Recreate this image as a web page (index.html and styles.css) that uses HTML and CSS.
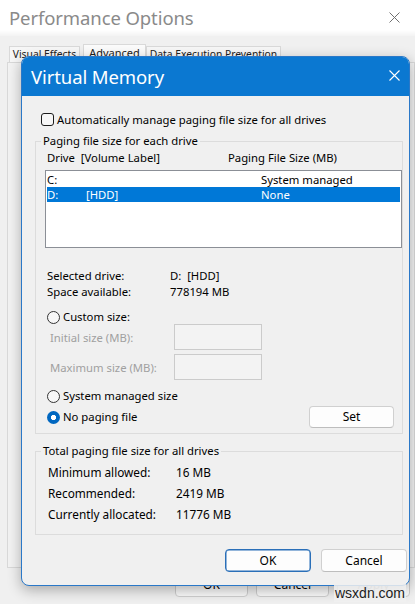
FILE: index.html
```html
<!DOCTYPE html>
<html>
<head>
<meta charset="utf-8">
<title>Virtual Memory</title>
<link rel="stylesheet" href="styles.css">
</head>
<body>
<div class="win">
  <div class="win-title">
    <span class="win-title-text">Performance Options</span>
    <svg class="win-close" width="11" height="11" viewBox="0 0 11 11"><path d="M0.5 0.5L10.5 10.5M10.5 0.5L0.5 10.5" stroke="#707070" stroke-width="1" fill="none"/></svg>
  </div>
  <div class="win-body">
    <div class="tabs">
      <div class="tab tab-visual">Visual Effects</div>
      <div class="tab tab-active">Advanced</div>
      <div class="tab tab-dep">Data Execution Prevention</div>
    </div>
    <div class="tab-panel"></div>
    <div class="win-buttons">
      <div class="wbtn">OK</div>
      <div class="wbtn">Cancel</div>
      <div class="wbtn wbtn-disabled">Apply</div>
    </div>
  </div>
</div>

<div class="dialog">
  <div class="dlg-title">
    <span class="dlg-title-text">Virtual Memory</span>
    <svg class="dlg-close" width="11" height="11" viewBox="0 0 11 11"><path d="M0.5 0.5L10.5 10.5M10.5 0.5L0.5 10.5" stroke="#ffffff" stroke-width="1.1" fill="none"/></svg>
  </div>
  <div class="dlg-body">
    <div class="check-row">
      <span class="checkbox"></span>
      <span>Automatically manage paging file size for all drives</span>
    </div>

    <fieldset class="group group-drives">
      <legend>Paging file size for each drive</legend>
      <div class="list-head">
        <span class="lh-drive">Drive&nbsp;&nbsp;[Volume Label]</span>
        <span>Paging File Size (MB)</span>
      </div>
      <div class="listbox">
        <div class="lrow">
          <span class="c-drive">C:</span><span class="c-label"></span><span>System managed</span>
        </div>
        <div class="lrow lrow-sel">
          <span class="c-drive">D:</span><span class="c-label">[HDD]</span><span>None</span>
        </div>
      </div>

      <div class="info">
        <div class="info-row"><span class="info-label">Selected drive:</span><span>D:&nbsp;&nbsp;[HDD]</span></div>
        <div class="info-row"><span class="info-label">Space available:</span><span>778194 MB</span></div>
      </div>

      <div class="radio-row radio-custom"><span class="radio"></span><span>Custom size:</span></div>
      <div class="size-row size-initial">
        <span class="size-label">Initial size (MB):</span>
        <span class="size-input"></span>
      </div>
      <div class="size-row size-max">
        <span class="size-label">Maximum size (MB):</span>
        <span class="size-input"></span>
      </div>
      <div class="radio-row radio-system"><span class="radio"></span><span>System managed size</span></div>
      <div class="nopage-row">
        <div class="radio-row"><span class="radio radio-on"></span><span>No paging file</span></div>
        <div class="btn btn-set">Set</div>
      </div>
    </fieldset>

    <fieldset class="group group-total">
      <legend>Total paging file size for all drives</legend>
      <div class="total-row"><span class="total-label">Minimum allowed:</span><span>16 MB</span></div>
      <div class="total-row"><span class="total-label">Recommended:</span><span>2419 MB</span></div>
      <div class="total-row"><span class="total-label">Currently allocated:</span><span>11776 MB</span></div>
    </fieldset>

    <div class="dlg-buttons">
      <div class="btn btn-default">OK</div>
      <div class="btn">Cancel</div>
    </div>
  </div>
</div>

<div class="watermark">wsxdn.com</div>
</body>
</html>
```

FILE: styles.css
```css
* { box-sizing: border-box; }

html, body {
  margin: 0;
  padding: 0;
}

body {
  width: 415px;
  height: 604px;
  overflow: hidden;
  background: #f0f0f0;
  font-family: "Noto Sans", "Open Sans", sans-serif;
  font-size: 11.3px;
  color: #000;
  position: relative;
}

/* background window */
.win {
  height: 604px;
  display: flex;
  flex-direction: column;
}

.win-title {
  height: 36px;
  background: linear-gradient(#ffffff 0, #ffffff 30px, #f3f3f3 36px);
  display: flex;
  align-items: center;
  justify-content: space-between;
  padding: 0 15px 2px 9px;
}

.win-title-text {
  font-size: 18.5px;
  color: #8a8a8a;
  letter-spacing: -0.1px;
}

.win-close { display: block; }

.win-body {
  flex: 1;
  display: flex;
  flex-direction: column;
  padding: 8px 0 0 7px;
}

.tabs {
  display: flex;
  align-items: flex-end;
  height: 18px;
  padding-left: 2px;
}

.tab {
  height: 16px;
  border: 1px solid #d9d9d9;
  border-bottom: none;
  background: #f7f7f7;
  font-size: 10.3px;
  line-height: 15px;
  color: #222;
  text-align: center;
  white-space: nowrap;
  overflow: hidden;
}

.tab-visual { width: 71px; }

.tab-active {
  width: 63px;
  height: 18px;
  background: #fbfbfb;
  margin-left: 3px;
  font-size: 11px;
}

.tab-dep { width: 135px; }

.tab-panel {
  height: 506px;
  border: 1px solid #d9d9d9;
  background: #f3f3f3;
}

.win-buttons {
  display: flex;
  gap: 8px;
  padding-left: 168px;
  margin-top: 6px;
}

.wbtn {
  width: 73px;
  height: 23px;
  border: 1px solid #cfcfcf;
  border-radius: 4px;
  background: #fbfbfb;
  text-align: center;
  line-height: 20px;
  font-size: 12px;
}

.wbtn-disabled { color: #b0b0b0; }

.watermark {
  position: absolute;
  left: 334px;
  top: 584px;
  font-family: "Liberation Sans", sans-serif;
  font-size: 14px;
  line-height: 18px;
  color: #1c1c1c;
  background: rgba(240, 240, 240, 0.85);
  padding: 0 1px;
}

/* dialog */
.dialog {
  position: absolute;
  left: 21px;
  top: 56px;
  width: 389px;
  height: 530px;
  border: 1px solid #2a78c8;
  border-radius: 8px;
  overflow: hidden;
  background: #f0f0f0;
  box-shadow: 0 4px 14px rgba(0, 0, 0, 0.3);
}

.dlg-title {
  height: 39px;
  background: #0b78d1;
  display: flex;
  align-items: center;
  justify-content: space-between;
  padding: 0 9px 0 9px;
}

.dlg-title-text {
  font-size: 18.5px;
  color: #fff;
  letter-spacing: -0.1px;
}

.dlg-close { display: block; margin-top: -2px; }

.dlg-body {
  padding: 15px 2px 0 13px;
}

.check-row {
  display: flex;
  align-items: center;
  height: 16px;
  margin-left: 6px;
  gap: 3px;
}

.checkbox {
  width: 13px;
  height: 13px;
  border: 1px solid #1b1b1b;
  border-radius: 3px;
  background: #f7f7f7;
}

.group {
  width: 368px;
  margin: 6px 0 0 0;
  padding: 0;
  border: 1px solid #dcdcdc;
  min-width: 0;
}

.group legend {
  margin-left: 5px;
  padding: 0 2px;
  line-height: 16px;
  height: 16px;
}

.list-head {
  display: flex;
  height: 16px;
  line-height: 16px;
  margin-top: 1px;
  padding-left: 11px;
}

.lh-drive { width: 181px; }

.listbox {
  margin: 4px 0 0 9px;
  width: 357px;
  height: 78px;
  border: 1px solid #8b8f96;
  background: #fff;
  padding: 1px;
}

.lrow {
  display: flex;
  height: 15px;
  line-height: 15px;
}

.lrow-sel {
  background: #0078d7;
  color: #fff;
}

.c-drive { width: 39px; }
.c-label { width: 175px; }

.info {
  margin-top: 20px;
  padding-left: 11px;
}

.info-row {
  display: flex;
  height: 16px;
  line-height: 16px;
}

.info-label { width: 123px; }

.radio-row {
  display: flex;
  align-items: center;
  gap: 3px;
  height: 16px;
  line-height: 16px;
  padding-left: 11px;
}

.radio {
  width: 13px;
  height: 13px;
  border: 1px solid #333;
  border-radius: 50%;
  background: #f7f7f7;
  flex: none;
}

.radio-on {
  border: none;
  background: radial-gradient(circle, #ffffff 0 2.4px, #0067c0 2.9px);
}

.radio-custom { margin-top: 9px; }

.size-row {
  display: flex;
  align-items: center;
  height: 26px;
  padding-left: 14px;
  color: #a0a0a0;
}

.size-initial { margin-top: -1px; }
.size-max { margin-top: 4px; }

.size-label { width: 124px; }

.size-input {
  width: 88px;
  height: 26px;
  border: 1px solid #cbcbcb;
  background: #f3f3f3;
}

.radio-system { margin-top: 8px; }

.nopage-row {
  display: flex;
  align-items: center;
  justify-content: space-between;
  height: 22px;
  margin-top: 2px;
  padding-right: 8px;
  margin-bottom: 5px;
}

.btn {
  width: 86px;
  height: 23px;
  border: 1px solid #d0d0d0;
  border-bottom-color: #bdbdbd;
  border-radius: 4px;
  background: #fdfdfd;
  text-align: center;
  line-height: 21px;
  font-size: 12px;
}

.btn-set {
  width: 85px;
  height: 22px;
  line-height: 20px;
}

.group-total {
  margin-top: 9px;
  padding: 3px 0 9px 0;
}

.total-row {
  display: flex;
  height: 21px;
  line-height: 21px;
  padding-left: 12px;
  font-size: 11.8px;
}

.total-label { width: 128px; }

.dlg-buttons {
  display: flex;
  justify-content: flex-end;
  gap: 10px;
  margin-top: 14px;
}

.btn-default {
  border: 1px solid #2a6fb8;
  box-shadow: inset 0 0 0 0.5px #2a6fb8;
}
```
